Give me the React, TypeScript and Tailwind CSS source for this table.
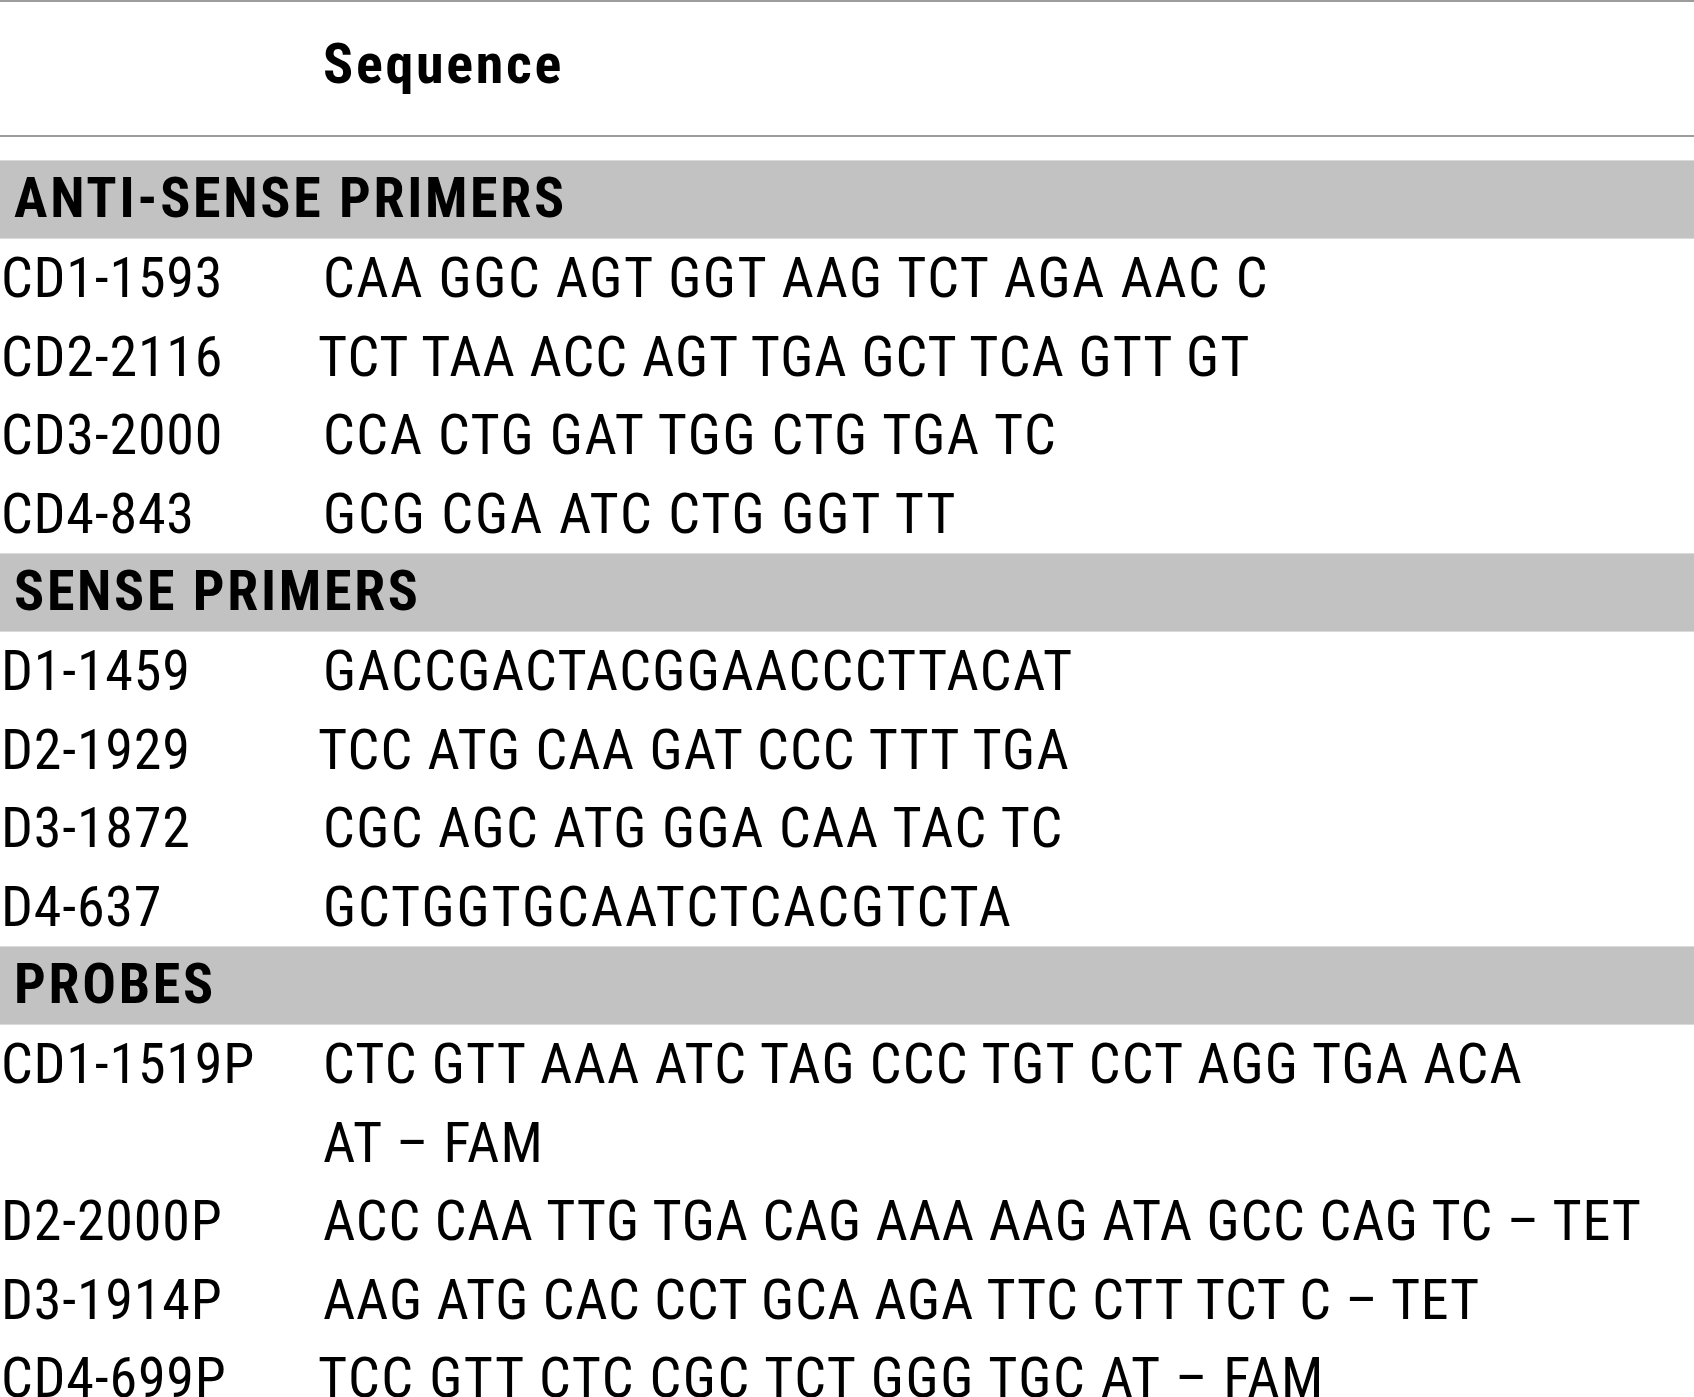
import React from "react";

type R = { label: string; seq: string[]; shift?: boolean; ls?: string };

const anti: R[] = [
  { label: "CD1-1593", seq: ["CAA GGC AGT GGT AAG TCT AGA AAC C"] },
  { label: "CD2-2116", seq: ["TCT TAA ACC AGT TGA GCT TCA GTT GT"], shift: true, ls: "tracking-[1px]" },
  { label: "CD3-2000", seq: ["CCA CTG GAT TGG CTG TGA TC"] },
  { label: "CD4-843", seq: ["GCG CGA ATC CTG GGT TT"], ls: "tracking-[1.9px]" },
];
const sense: R[] = [
  { label: "D1-1459", seq: ["GACCGACTACGGAACCCTTACAT"], ls: "tracking-[1.4px]" },
  { label: "D2-1929", seq: ["TCC ATG CAA GAT CCC TTT TGA"], shift: true, ls: "tracking-[1.2px]" },
  { label: "D3-1872", seq: ["CGC AGC ATG GGA CAA TAC TC"], ls: "tracking-[1.4px]" },
  { label: "D4-637", seq: ["GCTGGTGCAATCTCACGTCTA"], ls: "tracking-[2px]" },
];
const probes: R[] = [
  { label: "CD1-1519P", seq: ["CTC GTT AAA ATC TAG CCC TGT CCT AGG TGA ACA", "AT \u2013 FAM"], ls: "tracking-[1.2px]" },
  { label: "D2-2000P", seq: ["ACC CAA TTG TGA CAG AAA AAG ATA GCC CAG TC \u2013 TET"], ls: "tracking-[0.85px]" },
  { label: "D3-1914P", seq: ["AAG ATG CAC CCT GCA AGA TTC CTT TCT C \u2013 TET"], ls: "tracking-[0.8px]" },
  { label: "CD4-699P", seq: ["TCC GTT CTC CGC TCT GGG TGC AT \u2013 FAM"], shift: true },
];

function Band({ title }: { title: string }) {
  return (
    <div className="h-[79px] bg-[#c2c2c2] border-y border-[#dadada] pl-[14px] flex items-center font-bold text-[56px] tracking-[2.7px] text-black">
      <span className="-mt-[3px]">{title}</span>
    </div>
  );
}

function Row({ r }: { r: R }) {
  return (
    <div className="flex text-[56px] text-black whitespace-nowrap">
      <div className="w-[323px] shrink-0 pl-[1px] leading-[78.5px] tracking-[0.8px]">{r.label}</div>
      <div className={(r.shift ? "-ml-[5px] " : "") + (r.ls ?? "tracking-[1.6px]")}>
        {r.seq.map((s, i) => (
          <div key={i} className="leading-[78.5px]">
            {s}
          </div>
        ))}
      </div>
    </div>
  );
}

export default function App() {
  return (
    <div className="w-[1694px] h-[1397px] overflow-hidden bg-white font-['Roboto_Condensed','Roboto',sans-serif]">
      <div className="h-[2px] bg-[#9c9c9c]" />
      <div className="h-[133px] flex items-center">
        <div className="pl-[323px] font-bold text-[56px] tracking-[2.7px] text-black -mt-[10px]">Sequence</div>
      </div>
      <div className="h-[2px] bg-[#9c9c9c]" />
      <div className="h-[23px]" />
      <Band title="ANTI-SENSE PRIMERS" />
      {anti.map((r) => (
        <Row key={r.label} r={r} />
      ))}
      <Band title="SENSE PRIMERS" />
      {sense.map((r) => (
        <Row key={r.label} r={r} />
      ))}
      <Band title="PROBES" />
      {probes.map((r) => (
        <Row key={r.label} r={r} />
      ))}
    </div>
  );
}
